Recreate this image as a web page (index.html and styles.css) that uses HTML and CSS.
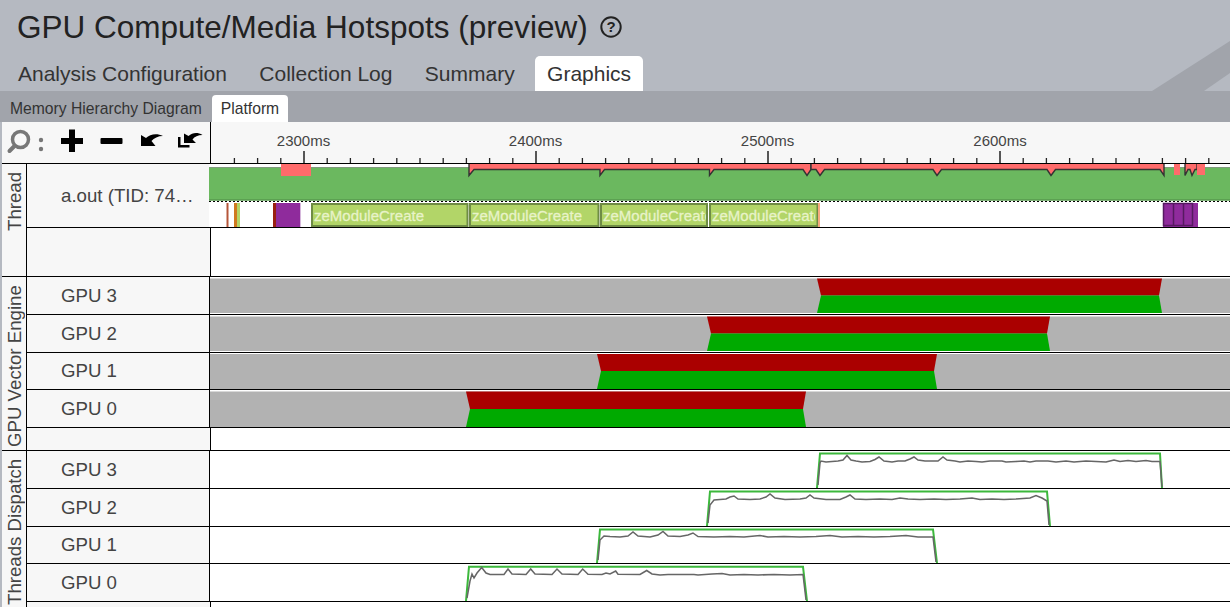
FILE: index.html
```html
<!DOCTYPE html>
<html lang="en">
<head>
<meta charset="utf-8">
<title>GPU Compute/Media Hotspots (preview)</title>
<link rel="stylesheet" href="styles.css">
</head>
<body>
<header class="header">
  <svg class="stripe" width="1230" height="91" viewBox="0 0 1230 91"><polygon points="1152,91 1230,41 1230,73 1204,91"/></svg>
  <div class="title-row">
    <h1 class="title">GPU Compute/Media Hotspots (preview)</h1>
    <svg class="help" width="24" height="24" viewBox="0 0 24 24"><circle cx="12" cy="12" r="9.7"/><text x="12" y="17.2" text-anchor="middle">?</text></svg>
  </div>
  <nav class="tabs">
    <span class="tab">Analysis Configuration</span>
    <span class="tab">Collection Log</span>
    <span class="tab">Summary</span>
    <span class="tab tab-active">Graphics</span>
  </nav>
</header>
<nav class="subtabs">
  <span class="subtab">Memory Hierarchy Diagram</span>
  <span class="subtab subtab-active">Platform</span>
</nav>
<main class="viewer">
  <div class="toolbar-row">
    <div class="toolbar">
      <svg width="208" height="41" viewBox="2 122 208 41">
        <circle class="ic-lens" cx="20.5" cy="139.5" r="8"/>
        <path class="ic-handle" d="M14.5 146 9.5 151"/>
        <circle class="ic-dot" cx="41" cy="140" r="2.2"/><circle class="ic-dot" cx="41" cy="149" r="2.2"/>
        <path class="ic-solid" d="M69 129.500h6v8.500h8v6h-8v8h-6v-8h-8v-6h8z"/>
        <rect class="ic-solid" x="100.500" y="138" width="22" height="6" rx="1"/>
        <path class="ic-solid" d="M141 146V135l5 3c4-4 11-5 17-2-5 0-9 2-11.500 5l4 5z"/>
        <path class="ic-solid" d="M184 143V133.500l4.500 2.500c4-3.500 9-4 14-1-4.500 0-8 1.500-10 4.500l3.500 3.500z"/>
        <path class="ic-solid" d="M178 137h2.500v8h9v2.500H178z"/>
      </svg>
    </div>
    <svg class="axis" width="1019" height="41" viewBox="211 122 1019 41">
      <text class="axis-label" x="303.500" y="146" text-anchor="middle">2300ms</text>
      <text class="axis-label" x="535.500" y="146" text-anchor="middle">2400ms</text>
      <text class="axis-label" x="767.500" y="146" text-anchor="middle">2500ms</text>
      <text class="axis-label" x="1000" y="146" text-anchor="middle">2600ms</text>
      <path class="tick" d="M234.400 158v5M257.600 158v5M280.800 158v5M327.200 158v5M350.400 158v5M373.600 158v5M396.800 158v5M420 158v5M443.200 158v5M466.400 158v5M489.600 158v5M512.800 158v5M559.200 158v5M582.400 158v5M605.600 158v5M628.800 158v5M652 158v5M675.200 158v5M698.400 158v5M721.600 158v5M744.800 158v5M791.200 158v5M814.400 158v5M837.600 158v5M860.800 158v5M884 158v5M907.200 158v5M930.400 158v5M953.600 158v5M976.800 158v5M1023.200 158v5M1046.400 158v5M1069.600 158v5M1092.800 158v5M1116 158v5M1139.200 158v5M1162.400 158v5M1185.600 158v5M1208.800 158v5"/>
      <path class="tick-major" d="M304 151v12M536 151v12M768 151v12M1000 151v12"/>
    </svg>
  </div>

  <section class="group">
    <div class="group-label"><span>Thread</span></div>
    <div class="rows">
      <div class="row row-thread">
        <div class="label label-plain">a.out (TID: 74…</div>
        <svg class="track" width="1021" height="63" viewBox="209 164 1021 63">
          <rect class="th-green" x="209" y="167" width="1021" height="33.500"/>
          <rect class="th-topedge" x="209" y="167" width="1021" height="1"/>
          <rect class="th-edge" x="209" y="199.500" width="1021" height="1"/>
          <path class="th-dots" d="M209 201.500H1230"/>
          <rect class="th-red" x="281" y="164" width="30" height="12"/>
          <path class="th-band" d="M469 163V175.500l5-6H600V175.500l4.500-6H709.500V175.500l4.500-6H803l4 6 4-6V163z"/>
          <path class="th-band" d="M811 169.500h5l4 6 4.500-6H933l4 6 4.500-6H1047l4 6 4.500-6H1160l4 6V163H811z"/>
          <rect class="th-red" x="1174" y="164" width="6" height="11"/>
          <path class="th-band" d="M1185 163V175.500l3-6h2l2 6 3-6h2V163z"/>
          <rect class="th-red" x="1197" y="164" width="8" height="11"/>
          <rect class="b-thin" x="226.500" y="203" width="2" height="24"/>
          <rect class="b-orange" x="234" y="203" width="3" height="24"/>
          <rect class="b-lime" x="237" y="203" width="3" height="24"/>
          <rect class="b-darkred" x="273" y="203" width="3" height="24"/>
          <rect class="b-purple" x="276" y="203" width="24" height="24"/>
          <rect class="b-lilac" x="300" y="203" width="1" height="24"/>
          <rect class="b-func" x="312" y="204" width="155.500" height="22"/>
          <svg x="311" y="203" width="157" height="24"><text class="b-text" x="3" y="18">zeModuleCreate</text></svg>
          <rect class="b-func" x="470" y="204" width="128.500" height="22"/>
          <svg x="469" y="203" width="130" height="24"><text class="b-text" x="3" y="18">zeModuleCreate</text></svg>
          <rect class="b-func" x="601" y="204" width="106" height="22"/>
          <svg x="600" y="203" width="106" height="24"><text class="b-text" x="3" y="18">zeModuleCreate</text></svg>
          <rect class="b-func" x="710" y="204" width="107.500" height="22"/>
          <svg x="709" y="203" width="106" height="24"><text class="b-text" x="3" y="18">zeModuleCreate</text></svg>
          <rect class="b-salmon" x="818" y="203" width="2" height="24"/>
          <rect class="b-purple" x="1163" y="203" width="35" height="24"/>
          <path class="b-purple-line" d="M1163.500 203.500h29v22h-29zM1173.500 203.500v22M1183.500 203.500v22"/>
        </svg>
      </div>
      <div class="row row-blank">
        <div class="label label-wide"></div>
      </div>
    </div>
  </section>

  <section class="group">
    <div class="group-label"><span>GPU Vector Engine</span></div>
    <div class="rows">
      <div class="row row-38">
        <div class="label">GPU 3</div>
        <svg class="track" width="1020" height="37" viewBox="210 0 1020 37">
          <rect class="ve-gray" x="210" y="1.500" width="1020" height="34.500"/>
          <polygon class="ve-red" points="817,1.500 1162,1.500 1159,18.500 821,18.500"/>
          <polygon class="ve-green" points="821,18.500 1159,18.500 1162,36 817,36"/>
        </svg>
      </div>
      <div class="row row-38">
        <div class="label">GPU 2</div>
        <svg class="track" width="1020" height="37" viewBox="210 0 1020 37">
          <rect class="ve-gray" x="210" y="1.500" width="1020" height="34.500"/>
          <polygon class="ve-red" points="707,1.500 1050,1.500 1047,18.500 711,18.500"/>
          <polygon class="ve-green" points="711,18.500 1047,18.500 1050,36 707,36"/>
        </svg>
      </div>
      <div class="row row-37">
        <div class="label">GPU 1</div>
        <svg class="track" width="1020" height="36" viewBox="210 0 1020 36">
          <rect class="ve-gray" x="210" y="1" width="1020" height="35"/>
          <polygon class="ve-red" points="597,1 937,1 934,18 601,18"/>
          <polygon class="ve-green" points="601,18 934,18 937,36 597,36"/>
        </svg>
      </div>
      <div class="row row-38">
        <div class="label">GPU 0</div>
        <svg class="track" width="1020" height="37" viewBox="210 0 1020 37">
          <rect class="ve-gray" x="210" y="1.500" width="1020" height="35.500"/>
          <polygon class="ve-red" points="466,1.500 806,1.500 803,19 470,19"/>
          <polygon class="ve-green" points="470,19 803,19 806,37 466,37"/>
        </svg>
      </div>
      <div class="row row-gap">
        <div class="label label-wide"></div>
      </div>
    </div>
  </section>

  <section class="group">
    <div class="group-label"><span>Threads Dispatch</span></div>
    <div class="rows">
      <div class="row row-38">
        <div class="label">GPU 3</div>
        <svg class="track" width="1020" height="37" viewBox="210 0 1020 37">
          <path class="td-green" d="M817 37 820 2.500H1160L1162 37"/>
          <path class="td-gray" d="M818 34 820 12 821 10 826 11 832 10.500 838 10 843 9 847 4.500 851 9 856 10 862 11 870 10.500 875 8.500 879 6 884 10 892 11 898 10 905 10 910 8 914 6 918 9 925 10 938 10 943 6 947 9 955 10 960 11 968 10 976 10.500 982 11 990 10 1002 10 1006 11 1016 10.500 1024 10 1030 11 1036 10 1048 10 1056 11 1066 10 1074 11 1086 10 1096 10.500 1106 11 1114 9 1120 10.500 1128 9.500 1136 10.500 1146 9.500 1152 10.500 1160 10.500 1162 36"/>
        </svg>
      </div>
      <div class="row row-38">
        <div class="label">GPU 2</div>
        <svg class="track" width="1020" height="37" viewBox="210 0 1020 37">
          <path class="td-green" d="M707 37 710 2.500H1047L1050 37"/>
          <path class="td-gray" d="M708 34 710 16 714 11 720 10.500 726 10 730 8 734 7 738 10 750 10.500 760 10 766 8 770 5 775 9 785 10.500 800 10 806 9 810 6 814 9 826 10.500 840 10.500 846 8 850 6 855 10 866 10.500 880 10 892 10.500 900 9 908 10 920 10.500 934 10 946 10.500 960 10 972 9 980 10.500 992 10 1004 10.500 1016 10 1030 9 1036 6.500 1042 9 1047 12 1049 36"/>
        </svg>
      </div>
      <div class="row row-37">
        <div class="label">GPU 1</div>
        <svg class="track" width="1020" height="36" viewBox="210 0 1020 36">
          <path class="td-green" d="M597 36 600 2.500H933L937 36"/>
          <path class="td-gray" d="M598 33 600 13 604 9 610 9.500 620 10 628 9 633 5 638 9 650 10 658 8 663 4.500 668 9 680 9.500 688 8 693 6 698 9.500 714 10 730 9.500 744 10 760 8.500 768 10 784 9.500 800 10 816 9.500 830 8.500 842 10 858 9.500 874 10 890 9.500 906 8.500 918 10 933 10 936 35"/>
        </svg>
      </div>
      <div class="row row-38">
        <div class="label">GPU 0</div>
        <svg class="track" width="1020" height="37" viewBox="210 0 1020 37">
          <path class="td-green" d="M466 37 469 2.700H803L807 37"/>
          <path class="td-gray" d="M467 34 470 17 472 10 474 14 477 9 481.700 3.500 486 9 490 10.500 504 10.500 508 5 512 10 526 10.500 530.700 5 535 10 552 10.500 557 5 562 10 578 10.500 582.700 5 588 10.300 602 10.500 606 9 610 10 615.700 7 618 10.300 640 10.500 646.700 6.500 652 10 660 11 668 10.500 694 10.500 698 11 712 10 722 9.500 730 11 744 10.500 758 11 774 10.500 790 11 803 10.500 806 36"/>
        </svg>
      </div>
      <div class="row row-rest">
        <div class="label label-wide"></div>
      </div>
    </div>
  </section>
</main>
</body>
</html>
```

FILE: styles.css
```css
html, body {
  margin: 0;
  padding: 0;
  height: 607px;
  overflow: hidden;
  background: #b5b9c1;
  font-family: "Liberation Sans", Arial, sans-serif;
}

.header {
  position: relative;
  height: 91px;
  background: #b5b9c1;
}

.stripe {
  position: absolute;
  left: 0;
  top: 0;
  fill: #a1a4ab;
}

.title-row {
  position: relative;
  display: flex;
  align-items: center;
  box-sizing: border-box;
  height: 56px;
  padding-left: 17px;
  padding-bottom: 2px;
}

.title {
  margin: 0;
  font-size: 31.500px;
  font-weight: 400;
  color: #222;
}

.help {
  margin-left: 11px;
}

.help circle {
  fill: none;
  stroke: #222;
  stroke-width: 2;
}

.help text {
  font-size: 15px;
  font-weight: 700;
  fill: #222;
}

.tabs {
  position: relative;
  display: flex;
  gap: 8.400px;
  height: 35px;
  padding-left: 6px;
}

.tab {
  padding: 0 12px;
  font-size: 21px;
  line-height: 35px;
  color: #333;
}

.tab-active {
  background: #fff;
  border-radius: 5px 5px 0 0;
}

.subtabs {
  display: flex;
  align-items: flex-end;
  height: 31px;
  background: #a1a4ab;
}

.subtab {
  padding: 0 10px;
  height: 27px;
  font-size: 15.700px;
  line-height: 28px;
  color: #333;
}

.subtab-active {
  padding: 0 9px;
  background: #fff;
  border-radius: 4px 4px 0 0;
}

.viewer {
  margin-left: 2px;
  background: #fff;
}

.toolbar-row {
  display: flex;
  height: 42px;
  box-sizing: border-box;
  border-bottom: 1px solid #000;
  background: #f7f7f7;
}

.toolbar {
  box-sizing: border-box;
  width: 209px;
  flex: none;
  border-right: 1px solid #000;
}

.toolbar svg,
.axis,
.track {
  display: block;
  flex: none;
}

.ic-lens {
  fill: none;
  stroke: #777;
  stroke-width: 3.5;
}

.ic-handle {
  fill: none;
  stroke: #777;
  stroke-width: 4;
  stroke-linecap: round;
}

.ic-dot {
  fill: #777;
}

.ic-solid {
  fill: #000;
}

.axis-label {
  font-size: 15px;
  fill: #444;
}

.tick {
  fill: none;
  stroke: #222;
  stroke-width: 1.300;
}

.tick-major {
  fill: none;
  stroke: #222;
  stroke-width: 1.500;
}

.group {
  display: flex;
}

.group-label {
  box-sizing: border-box;
  flex: none;
  width: 25px;
  contain: size;
  overflow: hidden;
  border-right: 1px solid #000;
  border-bottom: 1px solid #000;
  background: #f7f7f7;
}

.group-label span {
  display: block;
  height: 100%;
  box-sizing: border-box;
  padding-right: 1px;
  padding-bottom: 8px;
  writing-mode: vertical-rl;
  transform: rotate(180deg);
  text-align: right;
  white-space: nowrap;
  font-size: 18.670px;
  line-height: 24px;
  color: #444;
}

.rows {
  flex: 1;
  min-width: 0;
}

.row {
  display: flex;
  box-sizing: border-box;
  border-bottom: 1px solid #000;
  background: #fff;
}

.row-thread { height: 64px; }
.row-blank { height: 49px; }
.row-38 { height: 38px; }
.row-37 { height: 37px; }
.row-gap { height: 23px; }
.row-rest { height: 60px; }

.label {
  box-sizing: border-box;
  flex: none;
  display: flex;
  align-items: center;
  width: 183px;
  padding-left: 34px;
  border-right: 1px solid #000;
  background: #f7f7f7;
  font-size: 18.670px;
  color: #444;
  white-space: nowrap;
}

.label-plain {
  width: 182px;
  border-right: 0;
}

.label-wide {
  width: 184px;
}

.th-green { fill: #6bb85f; }
.th-topedge { fill: #7f9a7c; }
.th-edge { fill: #4f8a47; }

.th-dots {
  fill: none;
  stroke: #000;
  stroke-width: 1;
  stroke-dasharray: 2 2;
}

.th-red { fill: #ff6b6b; }

.th-band {
  fill: #ff6b6b;
  stroke: #333;
  stroke-width: 1.400;
}

.b-thin { fill: #b5563a; }
.b-orange { fill: #d07a20; }
.b-lime { fill: #b2d568; }
.b-darkred { fill: #9a2010; }
.b-purple { fill: #8f2b9c; }
.b-lilac { fill: #d6b8dc; }
.b-salmon { fill: #f5a97f; }

.b-func {
  fill: #b2d568;
  stroke: #6f8c45;
  stroke-width: 2;
}

.b-text {
  font-size: 15px;
  fill: #e8f3c8;
  stroke: #e8f3c8;
  stroke-width: 0.300;
}

.b-purple-line {
  fill: none;
  stroke: #561a60;
  stroke-width: 1.500;
}

.ve-gray { fill: #b2b2b2; }
.ve-red { fill: #aa0000; }
.ve-green { fill: #00aa00; }

.td-green {
  fill: none;
  stroke: #3cb83c;
  stroke-width: 2;
}

.td-gray {
  fill: none;
  stroke: #666;
  stroke-width: 1.500;
}
```
